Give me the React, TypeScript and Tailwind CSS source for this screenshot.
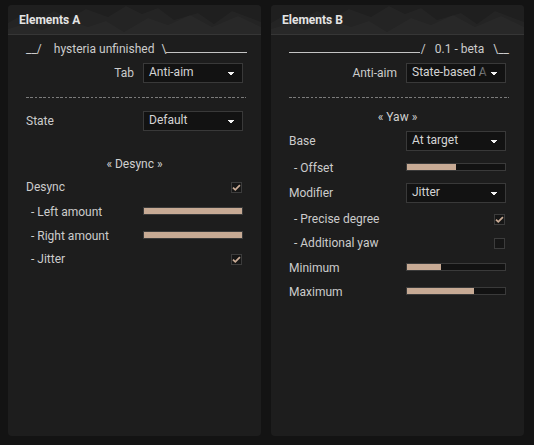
import React from "react";

type RowProps = { label: string; sub?: boolean; className?: string };

const font = { fontFamily: 'Roboto, "Noto Sans", sans-serif' };

const Label = ({ label, sub }: { label: string; sub?: boolean }) => (
  <span className={sub ? "pl-[5px] text-[12px] text-[#cccccc]" : "text-[12px] text-[#cccccc]"}>
    {sub ? `-  ${label}` : label}
  </span>
);

const Arrow = () => (
  <svg width="6" height="3" viewBox="0 0 6 3" className="absolute right-[8px] top-[8px]">
    <path d="M0 0H6V1H5V2H4V3H2V2H1V1H0Z" fill="#f2f2f2" />
  </svg>
);

const Dropdown = ({ value, fade }: { value: string; fade?: boolean }) => (
  <div className="relative h-[20px] w-[100px] border border-[#393939] bg-[#121212]">
    <span className="absolute left-[5px] top-[0px] whitespace-nowrap text-[12px] leading-[17px] text-[#d4d4d4]">
      {value}
    </span>
    {fade && (
      <span className="absolute left-[68px] top-[1px] h-[16px] w-[14px] bg-[linear-gradient(to_right,rgba(18,18,18,0.2),rgba(18,18,18,0.75))]" />
    )}
    <Arrow />
  </div>
);

const DropRow = ({ label, value, className, right, fade }: RowProps & { value: string; right?: boolean; fade?: boolean }) => (
  <div className={`flex h-[26px] items-start pt-[2px] ${className ?? ""}`}>
    <div className={`flex h-[20px] w-[117px] items-center ${right ? "justify-end pr-[9px]" : ""}`}>
      <Label label={label} />
    </div>
    <Dropdown value={value} fade={fade} />
  </div>
);

const SliderRow = ({ label, sub, pct, className }: RowProps & { pct: number }) => (
  <div className={`flex h-[24px] items-center ${className ?? ""}`}>
    <div className="w-[117px]">
      <Label label={label} sub={sub} />
    </div>
    <div className="h-[8px] w-[100px] border border-[#3a3a3a] bg-[#121212]">
      <div className="h-full bg-[#c7aa94]" style={{ width: `${pct}%` }} />
    </div>
  </div>
);

const CheckRow = ({ label, sub, checked, className }: RowProps & { checked?: boolean }) => (
  <div className={`flex h-[24px] items-center justify-between ${className ?? ""}`}>
    <Label label={label} sub={sub} />
    <div className="mr-[1px] flex h-[11px] w-[11px] items-center justify-center border border-[#3c3c3c] bg-[#161616]">
      {checked && (
        <svg width="9" height="9" viewBox="0 0 9 9">
          <path d="M1 4.6L3.3 6.8L7.9 2.2" fill="none" stroke="#c9ab95" strokeWidth="1.8" />
        </svg>
      )}
    </div>
  </div>
);

const Heading = ({ text, className }: { text: string; className?: string }) => (
  <div className={`flex items-center justify-center text-[12px] text-[#d0d0d0] ${className ?? ""}`}>{text}</div>
);

const Dashes = () => (
  <div className="h-[22px] pt-[10px]">
    <div className="h-px w-[220px] bg-[repeating-linear-gradient(90deg,#7b7b7b_0_2.6px,transparent_2.6px_4.3px)]" />
  </div>
);

const Mountains = () => (
  <svg className="absolute inset-0" width="253" height="29" viewBox="0 0 253 29" preserveAspectRatio="none">
    <path d="M0 18L14 10L28 16L46 6L62 13L78 4L100 12L118 1L134 9L150 3L166 15L190 8L206 19L224 6L253 17V29H0Z" fill="#ffffff" fillOpacity="0.025" />
    <path d="M0 24L20 18L34 25L58 14L80 22L98 16L116 27L140 13L160 20L182 10L204 22L230 11L253 22V29H0Z" fill="#ffffff" fillOpacity="0.02" />
  </svg>
);

const Panel = ({ title, children }: { title: string; children: React.ReactNode }) => (
  <div className="flex h-[431px] w-[253px] flex-col overflow-hidden rounded-[4px] bg-[#1d1d1d]">
    <div className="relative h-[30px] shrink-0 border-b border-[#363636] bg-[#1f1f1f]">
      <Mountains />
      <span className="absolute left-[11px] top-[6px] text-[12px] font-bold text-[#e4e4e4]">{title}</span>
    </div>
    <div className="flex flex-col px-[18px] pt-[2px]">{children}</div>
  </div>
);

export default function App() {
  return (
    <div className="flex h-[445px] w-[534px] gap-[10px] bg-[#131313] pl-[8px] pt-[5px]" style={font}>
      <Panel title="Elements A">
        <div className="flex h-[24px] items-center text-[12px] text-[#cccccc]">
          <span>__/</span>
          <span className="ml-[12px]">hysteria unfinished</span>
          <span className="ml-[7px]">\</span>
          <div className="mt-[7px] h-px flex-1 bg-[#c4c4c4] mr-[-4px]" />
        </div>
        <DropRow label="Tab" value="Anti-aim" right />
        <Dashes />
        <DropRow label="State" value="Default" />
        <Heading text="« Desync »" className="mt-[18px] h-[22px]" />
        <CheckRow label="Desync" checked />
        <SliderRow label="Left amount" sub pct={100} />
        <SliderRow label="Right amount" sub pct={100} />
        <CheckRow label="Jitter" sub checked />
      </Panel>
      <Panel title="Elements B">
        <div className="flex h-[24px] items-center text-[12px] text-[#cccccc]">
          <div className="mt-[7px] h-px flex-1 bg-[#c4c4c4]" />
          <span className="ml-[1px]">/</span>
          <span className="ml-[9px]">0.1 - beta</span>
          <span className="ml-[9px] mr-[-3px]">\__</span>
        </div>
        <DropRow label="Anti-aim" value="State-based A" right fade />
        <Dashes />
        <Heading text="« Yaw »" className="h-[16px]" />
        <DropRow label="Base" value="At target" className="mt-[4px]" />
        <SliderRow label="Offset" sub pct={50} />
        <DropRow label="Modifier" value="Jitter" className="mt-[2px]" />
        <CheckRow label="Precise degree" sub checked />
        <CheckRow label="Additional yaw" sub />
        <SliderRow label="Minimum" pct={35} />
        <SliderRow label="Maximum" pct={68} />
      </Panel>
    </div>
  );
}
